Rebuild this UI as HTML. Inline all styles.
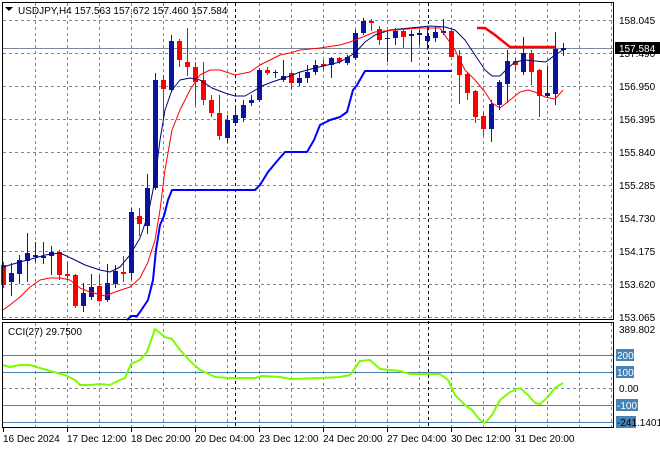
<!DOCTYPE html>
<html><head><meta charset="utf-8"><style>
body{margin:0;background:#fff;width:660px;height:450px;overflow:hidden}
svg{display:block;font-family:"Liberation Sans",sans-serif;font-size:10px}
</style></head><body>
<svg id="s" width="660" height="450" xmlns="http://www.w3.org/2000/svg">
<rect width="660" height="450" fill="#fff"/>
<g id="grid" stroke="#7d8794" stroke-dasharray="3,3" stroke-width="1"></g>
<line x1="235.5" y1="3" x2="235.5" y2="427" stroke="#000" stroke-dasharray="3,3"/>
<line x1="428.5" y1="3" x2="428.5" y2="427" stroke="#000" stroke-dasharray="3,3"/>
<line x1="3" y1="48.5" x2="613" y2="48.5" stroke="#7a8899"/>
<g id="cci" stroke="#4a80b0"></g>
<g id="plot"></g>
<rect x="2.5" y="2.5" width="611" height="317" fill="none" stroke="#000"/>
<rect x="2.5" y="322.5" width="611" height="105" fill="none" stroke="#000"/>
<g fill="#000">
<path d="M5 7h8l-4 4z"/>
<text x="18" y="14">USDJPY,H4  157.563 157.672 157.460 157.584</text>
<text x="8" y="335">CCI(27) 29.7500</text>
<text x="619" y="24">158.045</text>
<text x="619" y="57">157.490</text>
<text x="619" y="90">156.950</text>
<text x="619" y="123">156.395</text>
<text x="619" y="156">155.840</text>
<text x="619" y="189">155.285</text>
<text x="619" y="222">154.730</text>
<text x="619" y="255">154.175</text>
<text x="619" y="288">153.620</text>
<text x="619" y="321">153.065</text>
<text x="619" y="333">389.802</text>
<text x="619" y="392">0.00</text>
</g>
<rect x="615" y="42" width="45" height="12" fill="#000"/>
<text x="619" y="52" fill="#fff">157.584</text>
<rect x="616" y="349" width="18" height="12" fill="#4682b4"/><text x="617" y="359" fill="#fff">200</text>
<rect x="616" y="366" width="18" height="12" fill="#4682b4"/><text x="617" y="376" fill="#fff">100</text>
<rect x="616" y="399" width="22" height="12" fill="#4682b4"/><text x="617" y="409" fill="#fff">-100</text>
<rect x="616" y="416" width="20" height="12" fill="#4682b4"/><text x="617" y="426" fill="#000">-241.1401</text>
<g fill="#000" id="tl">
<text x="3" y="442">16 Dec 2024</text>
<text x="67" y="442">17 Dec 12:00</text>
<text x="131" y="442">18 Dec 20:00</text>
<text x="195" y="442">20 Dec 04:00</text>
<text x="259" y="442">23 Dec 12:00</text>
<text x="323" y="442">24 Dec 20:00</text>
<text x="387" y="442">27 Dec 04:00</text>
<text x="451" y="442">30 Dec 12:00</text>
<text x="515" y="442">31 Dec 20:00</text>
</g>
</svg>
<script>
var NS="http://www.w3.org/2000/svg",s=document.getElementById('s');
function el(p,t,a){var e=document.createElementNS(NS,t);for(var k in a)e.setAttribute(k,a[k]);p.appendChild(e);return e;}
var g=document.getElementById('grid');
for(var x=35;x<613;x+=32){el(g,'line',{x1:x+.5,y1:3,x2:x+.5,y2:319});el(g,'line',{x1:x+.5,y1:323,x2:x+.5,y2:427});}
[20,53,86,119,152,185,218,251,284,317].forEach(function(y){el(g,'line',{x1:3,y1:y+.5,x2:613,y2:y+.5});});
el(g,'line',{x1:3,y1:388.5,x2:613,y2:388.5});
var c=document.getElementById('cci');
[355,372,405,422].forEach(function(y){el(c,'line',{x1:3,y1:y+.5,x2:613,y2:y+.5});});
for(var i=0;i<9;i++){el(s,'line',{x1:3+64*i+.5,y1:428,x2:3+64*i+.5,y2:432,stroke:'#000'});}
var p=document.getElementById('plot');
function pl(pts,col,w){el(p,'polyline',{points:pts.map(function(a){return a.join(',')}).join(' '),fill:'none',stroke:col,'stroke-width':w,'stroke-linejoin':'round'});}
var C=[[3,'r',265,285,262,288],[11,'b',273,282,263,296],[19,'b',260,274,255,284],[27,'b',253,261,233,282],[35,'b',255,257,242,262],[43,'b',256,258,242,264],[51,'b',252,256,246,275],[59,'r',252,275,250,280],[67,'r',274,276,262,280],[75,'r',275,306,274,308],[83,'b',293,306,283,312],[91,'b',287,297,274,300],[99,'r',286,301,275,302],[107,'b',283,300,264,302],[115,'b',271,284,265,288],[123,'r',272,274,256,282],[131,'b',212,273,208,280],[139,'r',216,224,208,236],[147,'b',188,226,174,234],[155,'b',80,188,73,190],[163,'r',80,89,75,120],[171,'b',41,90,35,92],[179,'r',41,60,39,67],[187,'r',62,67,28,76],[195,'r',67,82,62,105],[203,'r',80,100,62,105],[211,'r',100,113,95,117],[219,'r',113,136,95,140],[227,'b',120,138,115,143],[235,'b',115,123,105,126],[243,'b',105,118,100,122],[251,'b',100,103,95,106],[259,'b',70,100,68,102],[267,'r',70,73,67,75],[275,'b',72,73,70,78],[283,'b',76,80,60,82],[291,'r',73,83,72,90],[299,'b',78,83,72,86],[307,'b',72,78,65,83],[315,'b',65,72,60,75],[323,'r',64,66,60,70],[331,'b',58,65,57,78],[339,'r',58,62,57,64],[347,'b',57,63,55,65],[355,'b',33,58,30,60],[363,'b',21,33,18,35],[371,'r',21,23,19,31],[379,'r',29,40,26,45],[387,'b',38,39,30,62],[395,'b',31,38,28,45],[403,'r',31,37,30,48],[411,'b',34,36,30,62],[419,'b',33,35,30,45],[427,'b',36,41,26,50],[435,'b',32,38,27,42],[443,'b',31,33,19,35],[451,'r',31,57,30,57],[459,'r',56,75,50,104],[467,'r',74,93,73,100],[475,'r',91,117,90,123],[483,'r',116,129,112,136],[491,'b',104,129,100,142],[499,'b',82,105,80,110],[507,'b',61,84,50,103],[515,'r',61,65,58,70],[523,'b',53,72,37,75],[531,'r',53,72,50,85],[539,'r',70,96,69,117],[547,'b',93,96,66,98],[555,'b',49,94,32,105],[563,'b',48,50,43,56]];
C.forEach(function(k){var r=k[1]=='r';
el(p,'line',{x1:k[0]+.5,y1:k[4],x2:k[0]+.5,y2:k[5],stroke:r?'#f00':'#1010c8'});
el(p,'rect',{x:k[0]-2,y:k[2],width:5,height:Math.max(1,k[3]-k[2]),fill:r?'#f00':'#0a14a0'});});
pl([[3,267],[20,262],[35,258],[45,255],[60,253],[75,260],[85,265],[100,270],[110,272],[120,267],[130,255],[140,238],[148,215],[155,180],[160,140],[165,110],[172,90],[180,80],[190,78],[200,80],[212,88],[225,93],[235,96],[245,96],[252,92],[262,86],[272,82],[290,76],[300,72],[315,68],[340,62],[355,53],[365,42],[375,35],[390,30],[410,28],[430,26],[445,27],[455,30],[465,40],[475,55],[485,70],[492,76],[500,76],[508,68],[515,62],[525,60],[535,61],[546,62],[555,55],[563,50]],'#000080',1);
pl([[3,310],[10,305],[20,297],[30,287],[40,280],[50,278],[60,278],[70,280],[80,288],[90,292],[105,296],[115,292],[130,287],[140,278],[148,262],[155,240],[160,210],[165,170],[172,130],[180,110],[190,90],[200,75],[210,70],[220,70],[235,75],[250,72],[260,65],[270,60],[280,55],[290,53],[300,50],[320,48],[340,45],[350,42],[360,38],[375,32],[395,30],[420,28],[440,28],[455,50],[465,70],[475,80],[485,92],[492,103],[500,108],[510,100],[520,92],[528,90],[535,92],[545,97],[555,99],[563,90]],'#f00',1);
pl([[127,320],[131,316],[137,316],[140,312],[148,300],[153,280],[156,250],[160,225],[164,216],[168,200],[172,190],[185,190],[255,190],[260,185],[268,172],[278,160],[285,152],[307,152],[314,140],[320,125],[330,120],[340,117],[347,112],[353,90],[357,85],[365,71],[452,71]],'#0000ff',2);
pl([[477,28],[485,28],[495,35],[505,43],[510,47],[555,47]],'#f00',2.5);
pl([[3,365],[10,367],[20,365],[30,365],[40,368],[50,371],[65,375],[75,380],[80,385],[90,385],[100,384],[110,385],[120,380],[125,378],[131,364],[140,360],[147,352],[155,329],[165,337],[172,339],[180,350],[190,361],[200,370],[215,377],[230,378],[255,378],[262,376],[280,377],[290,379],[320,378],[340,377],[350,375],[360,361],[370,360],[380,369],[400,371],[410,374],[440,374],[448,380],[455,395],[465,405],[472,410],[480,420],[485,423],[492,415],[500,400],[510,392],[520,388],[528,395],[535,403],[540,404],[548,397],[555,388],[563,383]],'#7cfc00',2);
</script>
</body></html>
